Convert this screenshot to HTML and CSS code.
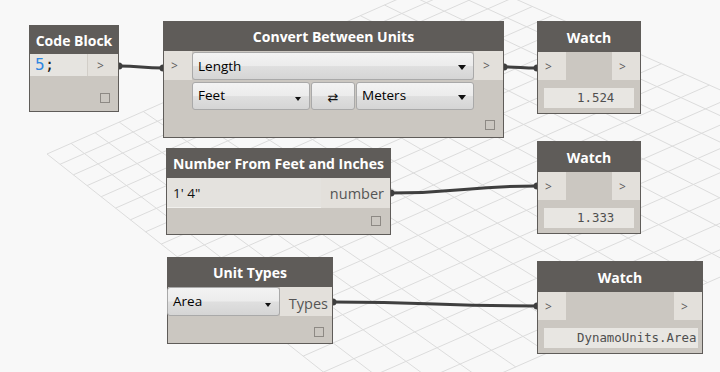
FILE: index.html
```html
<!DOCTYPE html>
<html>
<head>
<meta charset="utf-8">
<title>Dynamo units</title>
<link rel="stylesheet" href="styles.css">
</head>
<body>
<div class="canvas">
  <svg class="layer grid" id="grid" width="720" height="372"></svg>
  <svg class="layer wires" width="720" height="372">
    <path class="wire" d="M119,66 C141,66 141,68 163,68"/>
    <path class="wire" d="M504,67 C520,67 521,68 537,68"/>
    <path class="wire" d="M391,193 C464,193 464,186 537,186"/>
    <path class="wire" d="M333,302 C435,302 435,306 537,306"/>
    <circle class="cap" cx="119" cy="66" r="3.5"/>
    <circle class="cap" cx="163" cy="68" r="3.5"/>
    <circle class="cap" cx="504" cy="67" r="3.5"/>
    <circle class="cap" cx="537" cy="68" r="3.5"/>
    <circle class="cap" cx="391" cy="193" r="3.5"/>
    <circle class="cap" cx="537" cy="186" r="3.5"/>
    <circle class="cap" cx="333" cy="302" r="3.5"/>
    <circle class="cap" cx="537" cy="306" r="3.5"/>
  </svg>

  <div class="node n-code">
    <div class="hdr h28">Code Block</div>
    <div class="row r22">
      <div class="code-in"><span class="num">5</span>;</div>
      <div class="port out code-out">&gt;</div>
    </div>
    <div class="foot pb8"><span class="chk"></span></div>
  </div>

  <div class="node n-conv">
    <div class="hdr h29">Convert Between Units</div>
    <div class="conv-body">
      <div class="pcol"><div class="port in">&gt;</div></div>
      <div class="conv-center">
        <div class="dd dd-len">Length<span class="arrow"></span></div>
        <div class="conv-row">
          <div class="dd dd-unit">Feet<span class="arrow small"></span></div>
          <div class="swap">&#8644;</div>
          <div class="dd dd-unit">Meters<span class="arrow"></span></div>
        </div>
      </div>
      <div class="pcol pcol-r"><div class="port out">&gt;</div></div>
    </div>
    <div class="foot pb7"><span class="chk"></span></div>
  </div>

  <div class="node watch w1">
    <div class="hdr h30">Watch</div>
    <div class="row r28">
      <div class="port in wport">&gt;</div>
      <div class="spacer"></div>
      <div class="port in wport">&gt;</div>
    </div>
    <div class="wval">1.524</div>
  </div>

  <div class="node n-feet">
    <div class="hdr h29">Number From Feet and Inches</div>
    <div class="row r30">
      <div class="txt-in">1' 4"</div>
      <div class="port out name-port">number</div>
    </div>
    <div class="foot pb8 pr9"><span class="chk"></span></div>
  </div>

  <div class="node watch w2">
    <div class="hdr h30">Watch</div>
    <div class="row r28">
      <div class="port in wport">&gt;</div>
      <div class="spacer"></div>
      <div class="port in wport">&gt;</div>
    </div>
    <div class="wval">1.333</div>
  </div>

  <div class="node n-types">
    <div class="hdr h29">Unit Types</div>
    <div class="row r29">
      <div class="dd dd-area">Area<span class="arrow small"></span></div>
      <div class="port out name-port types-port">Types</div>
    </div>
    <div class="foot pb6"><span class="chk"></span></div>
  </div>

  <div class="node watch w3">
    <div class="hdr h30">Watch</div>
    <div class="row r28">
      <div class="port in wport">&gt;</div>
      <div class="spacer"></div>
      <div class="port in wport">&gt;</div>
    </div>
    <div class="wval wval-wide">DynamoUnits.Area</div>
  </div>
</div>
<script src="script.js"></script>
</body>
</html>
```

FILE: styles.css
```css
* { box-sizing: border-box; }

body {
  margin: 0;
  background: #f8f8f8;
  font-family: "Open Sans", "DejaVu Sans", sans-serif;
}

.canvas {
  position: relative;
  width: 720px;
  height: 372px;
  overflow: hidden;
  background: #f8f8f8;
}

.layer {
  position: absolute;
  left: 0;
  top: 0;
}

.grid line {
  stroke: #dcdcdc;
  stroke-width: 1;
}

.wire {
  fill: none;
  stroke: #3f3f3f;
  stroke-width: 3;
}

.cap { fill: #3f3f3f; }

/* ---------- nodes ---------- */
.node {
  position: absolute;
  display: flex;
  flex-direction: column;
  border: 1px solid #5f5c59;
  background: #cbc7c1;
}

.hdr {
  flex: none;
  display: flex;
  align-items: center;
  justify-content: center;
  background: #5f5c59;
  color: #ffffff;
  font-weight: 700;
  font-size: 14px;
  white-space: nowrap;
  overflow: hidden;
}
.h28 { height: 28px; }
.h29 { height: 29px; }
.h30 { height: 30px; }

.row { flex: none; display: flex; }
.r22 { height: 22px; }
.r28 { height: 28px; }
.r29 { height: 29px; }
.r30 { height: 30px; }

.foot {
  flex: 1;
  display: flex;
  justify-content: flex-end;
  align-items: flex-end;
  padding-right: 8px;
}
.pb6 { padding-bottom: 6px; }
.pb7 { padding-bottom: 7px; }
.pb8 { padding-bottom: 8px; }
.pr9 { padding-right: 9px; }

.chk {
  width: 10px;
  height: 10px;
  border: 1px solid #8d8984;
}

.port {
  display: flex;
  align-items: center;
  background: #e3e0db;
  color: #5c5c5c;
  font-size: 12px;
}
.port.in { padding-left: 7px; }
.port.out { padding-left: 9px; }

/* code block */
.n-code { left: 29px; top: 25px; width: 90px; height: 87px; }
.code-in {
  width: 58px;
  background: #e6e4e0;
  font-family: "DejaVu Sans Mono", monospace;
  font-size: 16px;
  line-height: 22px;
  padding-left: 5px;
  color: #1a1a1a;
  border-right: 1px solid #d2cec8;
}
.num { color: #2f86e0; }
.code-out { flex: 1; padding-left: 8px; }

/* convert between units */
.n-conv { left: 163px; top: 21px; width: 341px; height: 117px; }
.conv-body { display: flex; flex: none; }
.pcol { width: 28px; }
.pcol-r { width: 29px; }
.pcol .port { height: 29px; }
.conv-center {
  width: 282px;
  padding-top: 1px;
  display: flex;
  flex-direction: column;
  gap: 2px;
}
.conv-row { display: flex; gap: 1px; }

.dd {
  position: relative;
  height: 28px;
  display: flex;
  align-items: center;
  padding: 0 0 1px 5px;
  border: 1px solid #a9a9a9;
  border-radius: 3px;
  background: linear-gradient(to bottom, #f3f3f3 0%, #ececec 48%, #dfdfdf 52%, #d5d5d5 100%);
  color: #000;
  font-size: 13.5px;
}
.dd-len { width: 282px; }
.dd-unit { width: 118px; padding-bottom: 3px; }
.dd-area { width: 113px; margin-left: -1px; height: 29px; }

.arrow {
  position: absolute;
  right: 7px;
  top: 50%;
  margin-top: -1px;
  width: 0;
  height: 0;
  border-left: 4px solid transparent;
  border-right: 4px solid transparent;
  border-top: 5px solid #111;
}
.arrow.small {
  border-left-width: 3px;
  border-right-width: 3px;
  border-top-width: 4px;
  right: 8px;
  margin-top: 1px;
}

.swap {
  width: 44px;
  height: 28px;
  display: flex;
  align-items: center;
  justify-content: center;
  border: 1px solid #a9a9a9;
  border-radius: 3px;
  background: linear-gradient(to bottom, #f3f3f3 0%, #ececec 48%, #dfdfdf 52%, #d5d5d5 100%);
  font-family: "DejaVu Sans", sans-serif;
  font-size: 13px;
  color: #111;
  padding-top: 3px;
}

/* watch */
.watch { width: 104px; height: 93px; left: 537px; }
.w1 { top: 21px; }
.w2 { top: 141px; }
.w3 { top: 261px; width: 166px; }
.wport { width: 28px; }
.spacer { flex: 1; }
.wval {
  flex: none;
  height: 20px;
  margin: 8px 6px 0 6px;
  padding-left: 33px;
  background: #e8e6e2;
  color: #4f4f4f;
  font-family: "DejaVu Sans Mono", monospace;
  font-size: 12.4px;
  line-height: 20px;
  white-space: nowrap;
  overflow: hidden;
}
.wval-wide { margin-right: 4px; }

/* feet and inches */
.n-feet { left: 166px; top: 148px; width: 225px; height: 87px; }
.txt-in {
  width: 155px;
  background: #e4e2de;
  border-bottom: 1px solid #f1f0ed;
  display: flex;
  align-items: center;
  padding-left: 6px;
  font-size: 13.5px;
  color: #111;
}
.name-port {
  flex: 1;
  justify-content: flex-end;
  padding-right: 6px;
  font-size: 14.5px;
  color: #555;
}

/* unit types */
.n-types { left: 167px; top: 257px; width: 166px; height: 87px; }
.types-port { padding-right: 4px; padding-top: 3px; }
```

FILE: script.js
```js
(function () {
  var svg = document.getElementById('grid');
  var ns = 'http://www.w3.org/2000/svg';
  var P = [[47, 154], [457, -27], [932, 184], [388, 423]];
  var x0 = P[0][0], y0 = P[0][1], x1 = P[1][0], y1 = P[1][1];
  var x2 = P[2][0], y2 = P[2][1], x3 = P[3][0], y3 = P[3][1];
  var dx1 = x1 - x2, dy1 = y1 - y2, dx2 = x3 - x2, dy2 = y3 - y2;
  var dx3 = x0 - x1 + x2 - x3, dy3 = y0 - y1 + y2 - y3;
  var den = dx1 * dy2 - dy1 * dx2;
  var g = (dx3 * dy2 - dy3 * dx2) / den;
  var h = (dx1 * dy3 - dy1 * dx3) / den;
  var a = x1 - x0 + g * x1, b = x3 - x0 + h * x3, c = x0;
  var d = y1 - y0 + g * y1, e = y3 - y0 + h * y3, f = y0;
  function m(u, v) {
    var w = g * u + h * v + 1;
    return [(a * u + b * v + c) / w, (d * u + e * v + f) / w];
  }
  function ln(p, q) {
    var l = document.createElementNS(ns, 'line');
    l.setAttribute('x1', p[0].toFixed(1));
    l.setAttribute('y1', p[1].toFixed(1));
    l.setAttribute('x2', q[0].toFixed(1));
    l.setAttribute('y2', q[1].toFixed(1));
    svg.appendChild(l);
  }
  var NU = 17, NV = 20, i;
  for (i = 0; i <= NU; i++) { ln(m(i / NU, 0), m(i / NU, 1)); }
  for (i = 0; i <= NV; i++) { ln(m(0, i / NV), m(1, i / NV)); }
})();
```
